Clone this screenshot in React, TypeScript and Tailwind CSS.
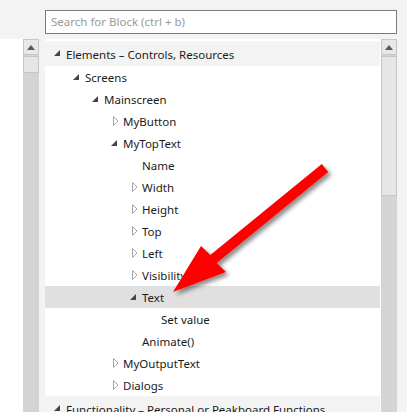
import React from "react";

type Row = {
  label: string;
  level: number;
  icon?: "open" | "closed";
  header?: boolean;
  selected?: boolean;
};

const rows: Row[] = [
  { label: "Elements – Controls, Resources", level: 0, icon: "open", header: true },
  { label: "Screens", level: 1, icon: "open" },
  { label: "Mainscreen", level: 2, icon: "open" },
  { label: "MyButton", level: 3, icon: "closed" },
  { label: "MyTopText", level: 3, icon: "open" },
  { label: "Name", level: 4 },
  { label: "Width", level: 4, icon: "closed" },
  { label: "Height", level: 4, icon: "closed" },
  { label: "Top", level: 4, icon: "closed" },
  { label: "Left", level: 4, icon: "closed" },
  { label: "Visibility", level: 4, icon: "closed" },
  { label: "Text", level: 4, icon: "open", selected: true },
  { label: "Set value", level: 5 },
  { label: "Animate()", level: 4 },
  { label: "MyOutputText", level: 3, icon: "closed" },
  { label: "Dialogs", level: 3, icon: "closed" },
  { label: "Functionality – Personal or Peakboard Functions", level: 0, icon: "open", header: true },
];

function Toggle({ icon }: { icon?: "open" | "closed" }) {
  return (
    <span className="w-[12px] h-[12px] flex items-center shrink-0">
      {icon === "open" && (
        <svg width="7" height="7" viewBox="0 0 7 7" className="ml-[1px]">
          <polygon points="6,0 6,6 0,6" fill="#444444" />
        </svg>
      )}
      {icon === "closed" && (
        <svg width="6" height="10" viewBox="0 0 6 10" className="ml-[3px]">
          <polygon points="0.5,0.5 5,5 0.5,9.5" fill="none" stroke="#a6a6a6" strokeWidth="1" />
        </svg>
      )}
    </span>
  );
}

function ScrollBar({ thumb }: { thumb: number }) {
  return (
    <div className="w-[16px] bg-[#d4d4d4] flex flex-col items-center">
      <div className="w-[16px] h-[16px] bg-[#e8e8e8] border border-[#c6c6c6] flex items-center justify-center">
        <svg width="8" height="5" viewBox="0 0 8 5">
          <polygon points="4,0 8,5 0,5" fill="#5a5a5a" />
        </svg>
      </div>
      <div className="w-[16px] mt-[1px] bg-[#e6e6e6] border border-[#c6c6c6]" style={{ height: thumb }} />
    </div>
  );
}

export default function App() {
  return (
    <div
      className="relative w-[407px] h-[412px] overflow-hidden bg-[#f3f3f3] flex flex-col text-[11.5px] text-[#1b1b1b]"
      style={{ fontFamily: '"Noto Sans", "Open Sans", sans-serif' }}
    >
      <div className="h-[39px] pt-[10px] pl-[45px] shrink-0">
        <div className="w-[352px] h-[24px] bg-white border border-[#7a7a7a] flex items-center px-[5px] text-[#9a9a9a]">
          Search for Block (ctrl + b)
        </div>
      </div>

      <div className="flex flex-1 min-h-0">
        <div className="w-[23px] bg-white" />
        <ScrollBar thumb={17} />
        <div className="w-[6px]" />
        <div className="w-[335px] bg-white flex flex-col pt-[2px]">
          {rows.map((r, i) => (
            <div
              key={i}
              className={`flex items-center shrink-0 whitespace-nowrap ${r.header ? "h-[25px] bg-[#f3f3f3]" : "h-[22px]"} ${r.selected ? "bg-[#e0e0e0]" : ""}`}
              style={{ paddingLeft: 8 + r.level * 19 }}
            >
              <Toggle icon={r.icon} />
              <span className="ml-[1px] pt-[2px]">{r.label}</span>
            </div>
          ))}
        </div>
        <div className="w-[1px] bg-white" />
        <ScrollBar thumb={140} />
      </div>

      <svg className="absolute left-0 top-0 pointer-events-none" width="407" height="412" viewBox="0 0 407 412">
        <defs>
          <filter id="shadow" x="-20%" y="-20%" width="140%" height="140%">
            <feDropShadow dx="3" dy="3" stdDeviation="2" floodColor="#000000" floodOpacity="0.45" />
          </filter>
        </defs>
        <polygon
          points="321.8,164.1 210.3,255.1 201,246 173,292 226,272 216.7,262.9 328.2,171.9"
          fill="#ff0000"
          filter="url(#shadow)"
        />
      </svg>
    </div>
  );
}
